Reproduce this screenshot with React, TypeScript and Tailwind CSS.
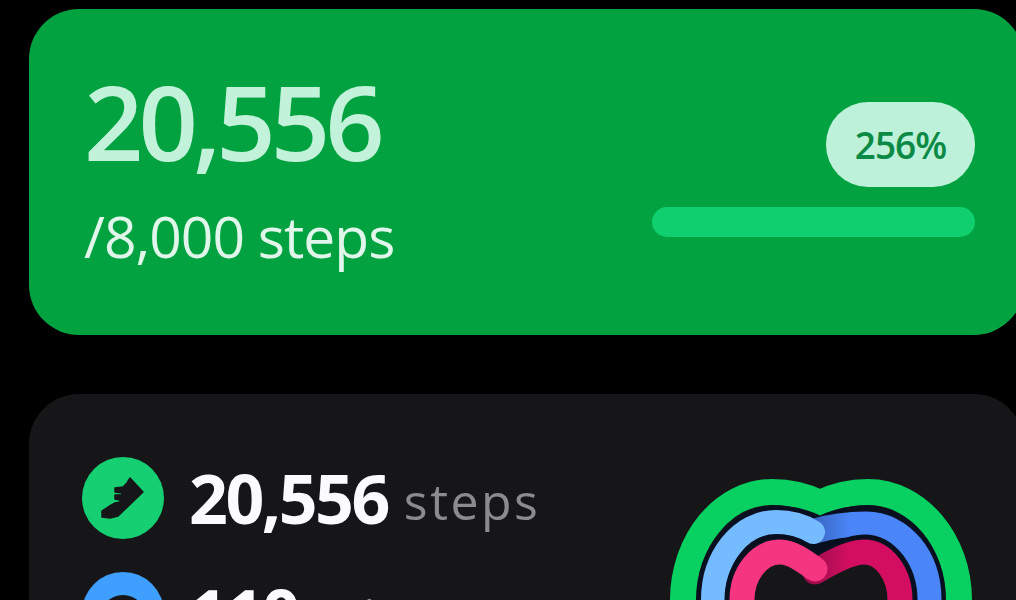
const font = "font-['Open_Sans','Noto_Sans',sans-serif]"

function ShoeIcon() {
  return (
    <svg width="82" height="82" viewBox="0 0 82 82" fill="none">
      <circle cx="41" cy="41" r="41" fill="#15cf72" />
      <path
        d="M61 35 L48 21 L45 26 L41 30 L33 31 L33 35 L40 36 L40 38 L33 38 L33 42 L38 43 L38 45 L33 46 L26 50 L20 54 L20 60 L28 61 L36 59 Z"
        fill="#161618"
        stroke="#161618"
        strokeWidth="1.5"
        strokeLinejoin="round"
      />
    </svg>
  )
}

function MinutesIcon() {
  return (
    <svg width="82" height="82" viewBox="0 0 82 82" fill="none">
      <circle cx="41" cy="41" r="41" fill="#3f9fff" />
      <circle cx="41" cy="46" r="23" fill="#161618" />
    </svg>
  )
}

function ActivityHeart() {
  return (
    <svg width="320" height="130" viewBox="660 470 320 130" fill="none" strokeLinecap="round">
      <defs>
        <linearGradient id="blueShade" x1="815" y1="0" x2="850" y2="0" gradientUnits="userSpaceOnUse">
          <stop offset="0" stopColor="#3a66c4" />
          <stop offset="1" stopColor="#4a86f8" />
        </linearGradient>
        <linearGradient id="pinkShade" x1="815" y1="0" x2="850" y2="0" gradientUnits="userSpaceOnUse">
          <stop offset="0" stopColor="#a30d4f" />
          <stop offset="1" stopColor="#d30e60" />
        </linearGradient>
      </defs>
      <path
        d="M683 640 L683 600 C683 541 723 492 772 492 C790 492 806 496 820 503 C834 496 850 492 868 492 C918 492 959 541 959 600 L959 640"
        stroke="#08d162"
        strokeWidth="26"
      />
      <path
        d="M713 640 L713 600 C713 557 741 522 776 522 C790 522 806 526 820 534 C834 526 850 522 866 522 C901 522 929 557 929 600 L929 640"
        stroke="#081020"
        strokeWidth="33"
      />
      <path d="M815 531 C832 526 850 524 866 524 C901 524 929 557 929 600 L929 640" stroke="url(#blueShade)" strokeWidth="25" />
      <path d="M713 640 L713 600 C713 557 741 522 776 522 C790 522 802 525 813 532" stroke="#74bbff" strokeWidth="24" />
      <path
        d="M742 640 L742 600 C742 574 759 552 780 552 C792 552 806 562 820 573 C834 562 850 552 864 552 C884 552 900 574 900 600 L900 640"
        stroke="#081020"
        strokeWidth="35"
      />
      {/* inner hole shows the card, the dark outline only runs on the outside */}
      <path
        d="M742 640 L742 600 C742 574 759 552 780 552 C792 552 806 562 820 573 C834 562 850 552 864 552 C884 552 900 574 900 600 L900 640 Z"
        fill="#161618"
      />
      <path d="M815 572 C832 562 850 552 864 552 C884 552 900 574 900 600 L900 640" stroke="url(#pinkShade)" strokeWidth="25" />
      <path d="M742 640 L742 600 C742 574 759 552 780 552 C792 552 804 561 815 569" stroke="#f5357f" strokeWidth="25" />
    </svg>
  )
}

function StatRow({ icon, value, unit }: { icon: React.ReactNode; value: string; unit: string }) {
  return (
    <div className="flex h-[82px] items-center">
      {icon}
      <span className="ml-[25px] text-[68px] leading-none font-bold tracking-[-2.5px] text-[#fbfbfd]">{value}</span>
      <span className="mt-[6px] ml-[16px] text-[50px] leading-none tracking-[2.5px] text-[#8b8b8e]">{unit}</span>
    </div>
  )
}

export default function App() {
  return (
    <div className={`h-[600px] w-[1016px] overflow-hidden bg-black pt-[9px] pl-[29px] ${font}`}>
      <section className="flex h-[326px] w-[995px] justify-between rounded-[50px] bg-[#02a240] pt-[60px] pr-[49px] pl-[55px]">
        <div className="flex flex-col">
          <span className="text-[104px] leading-[104px] font-semibold tracking-[-5px] text-[#c3f2da]">20,556</span>
          <span className="mt-[33px] text-[57px] leading-[60px] tracking-[-1px] text-[#e0f6ea]">/8,000 steps</span>
        </div>
        <div className="flex w-[323px] flex-col items-end pt-[33px]">
          <div className="flex h-[85px] w-[149px] items-center justify-center rounded-[42px] bg-[#bdf1d9]">
            <span className="text-[37px] font-semibold tracking-[-1px] text-[#0a8a45]">256%</span>
          </div>
          <div className="mt-[20px] h-[30px] w-full rounded-[15px] bg-[#10cf6f]" />
        </div>
      </section>
      <section className="mt-[59px] flex h-[300px] w-[995px] justify-between rounded-[50px] bg-[#161618] pt-[63px] pl-[53px]">
        <div className="flex flex-col gap-[33px]">
          <StatRow icon={<ShoeIcon />} value="20,556" unit="steps" />
          <StatRow icon={<MinutesIcon />} value="110" unit="mins" />
        </div>
        <div className="mt-[13px] mr-[44px]">
          <ActivityHeart />
        </div>
      </section>
    </div>
  )
}
